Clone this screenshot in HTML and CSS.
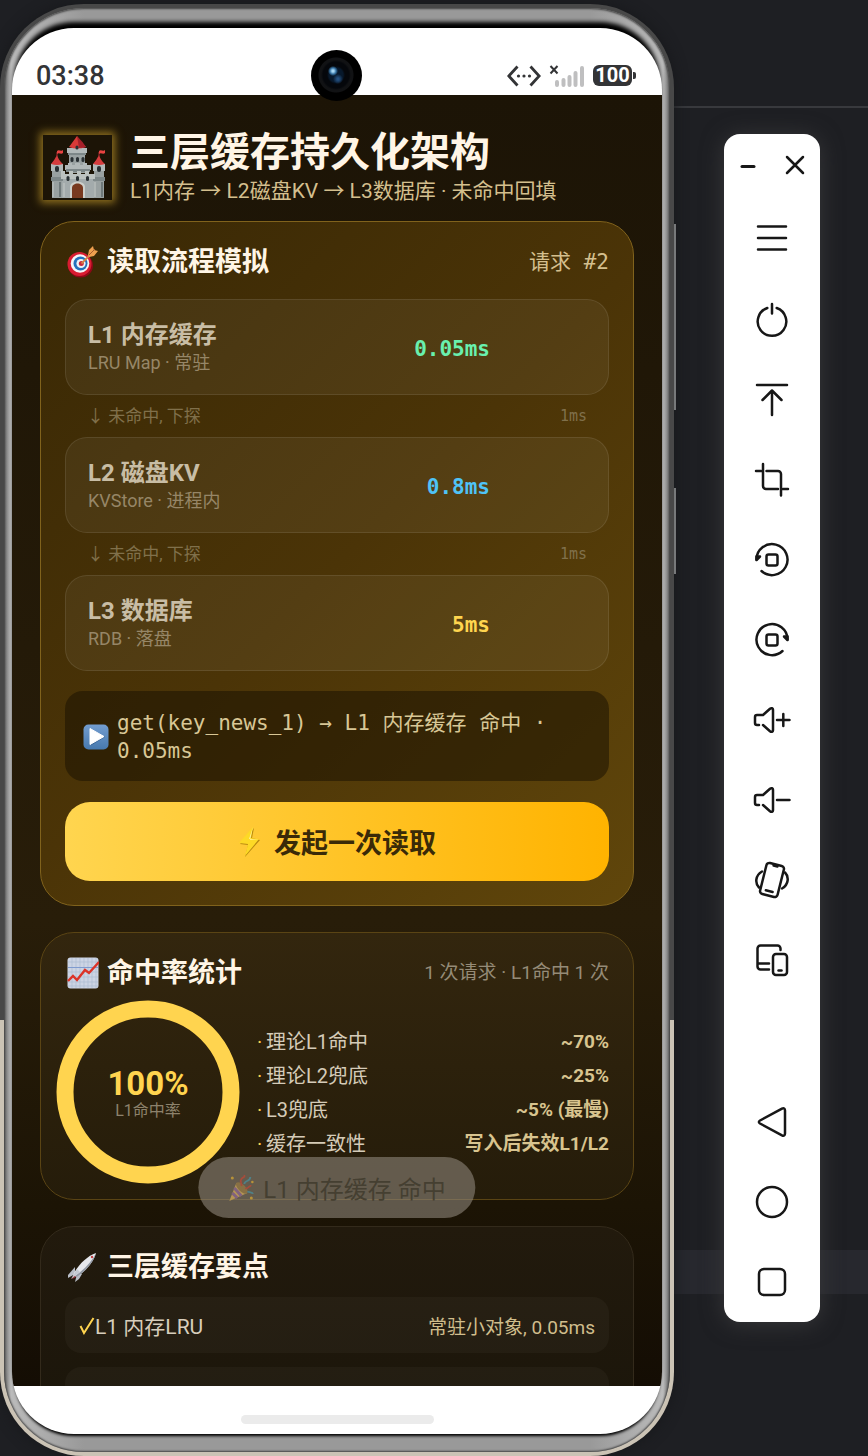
FILE: index.html
```html
<!DOCTYPE html>
<html lang="zh-CN">
<head>
<meta charset="utf-8">
<meta name="viewport" content="width=device-width, initial-scale=1">
<title>三层缓存持久化架构</title>
<link rel="stylesheet" href="styles.css">
</head>
<body>
<div class="desktop">
  <main class="phone">
    <span class="side-key side-key-volume"></span>
    <span class="side-key side-key-power"></span>
    <div class="screen">
      <header class="status">
        <span class="time">03:38</span>
        <span class="camera"></span>
        <span class="status-icons">
          <svg width="34" height="22" viewBox="0 0 34 22" fill="none" stroke="#333436" stroke-width="2.8"><path d="M10.500 1.500 1.800 11l8.700 9.500M23.500 1.500 32.200 11l-8.700 9.500"/><g fill="#333436" stroke="none"><circle cx="11.500" cy="11" r="1.600"/><circle cx="17" cy="11" r="1.600"/><circle cx="22.500" cy="11" r="1.600"/></g></svg>
          <svg width="36" height="22" viewBox="0 0 36 22" fill="none"><path d="M1.500 1l7 7.500M8.500 1l-7 7.500" stroke="#333436" stroke-width="2"/><path d="M8 17v3M14.500 15v5M20.500 12v8M26.500 8v12M33 3v17" stroke="#bfbfc0" stroke-width="4" stroke-linecap="round"/></svg>
          <span class="battery">100</span>
        </span>
      </header>

      <div class="app">
        <header class="hero">
          <span class="castle">
            <svg width="58" height="64" viewBox="0 0 58 64">
              <g fill="#99a1a1"><path d="M3 31h10v32H3z"/><path d="M45 31h10v32H45z"/><path d="M20 16h16v22H20z"/></g>
              <path d="M13 39h32v24H13z" fill="#a3abac"/>
              <path d="M2 29h12v7H2zM44 29h12v7H44zM18 13h20v5H18zM16 30v5h26v-5h-4v-2h-4v2h-3v-2h-5v2h-3v-2h-4v2z" fill="#b1b8b8"/>
              <path d="M2 42h12v4H2zM44 42h12v4H44zM17 34h24v3H17zM19 18h18v2H19z" fill="#7d8788"/>
              <path d="M12 39v-3h4v3h4v-3h4v3h4v-3h4v3h4v-3h4v3h6v5H12z" fill="#bcc2c0"/>
              <path d="M28 1Q23 8 20 12q8 3 17 0Q32 8 28 1z" fill="#d83a38"/><path d="M28 1q6 6 9 11-4 1-7 1z" fill="#a6212a"/>
              <path d="M8 20Q5 26 2 29q6 2 12 0-4-3-6-9zM50 20q-3 6-6 9 6 2 12 0-4-3-6-9z" fill="#d63c3d"/>
              <path d="M8 22v-5M50 22v-5" stroke="#a82931"/><path d="M8 16c2-2 4 1 6-1v3c-2 2-4-1-6 1zM50 16c2-2 4 1 6-1v3c-2 2-4-1-6 1z" fill="#e94341"/>
              <g fill="#293033"><rect x="26.500" y="10.500" width="3" height="4" rx="1.500"/><rect x="21.500" y="22" width="3" height="5" rx="1.500"/><rect x="27" y="22" width="3" height="5" rx="1.500"/><rect x="32.500" y="22" width="3" height="5" rx="1.500"/><rect x="6" y="31" width="4" height="6" rx="2"/><rect x="48" y="31" width="4" height="6" rx="2"/><rect x="17.500" y="41" width="3" height="5" rx="1.500"/><rect x="27" y="41" width="3" height="5" rx="1.500"/><rect x="37" y="41" width="3" height="5" rx="1.500"/></g>
              <path d="M21 63V52c0-7 15-7 15 0v11z" fill="#cdd0cb"/><path d="M23 63V53c0-6 11-6 11 0v10z" fill="#78391f"/>
              <path d="M4 47v15M46 47v15M15 48v14" stroke="#c5cac7"/><path d="M11 47v15M53 47v15" stroke="#6f797a" stroke-width="2"/>
            </svg>
          </span>
          <div>
            <h1>三层缓存持久化架构</h1>
            <p>L1内存 → L2磁盘KV → L3数据库 · 未命中回填</p>
          </div>
        </header>

        <section class="card card-flow">
          <div class="card-head">
            <svg class="emoji" viewBox="0 0 32 32"><ellipse cx="13.500" cy="19.500" rx="12.500" ry="12" fill="#8e0717"/><circle cx="12.500" cy="18" r="12" fill="#d91c31"/><circle cx="13" cy="17.500" r="9.300" fill="#f4f5f7"/><circle cx="13.500" cy="17.500" r="7" fill="#2471bc"/><circle cx="14" cy="17.500" r="4.600" fill="#eef2f6"/><circle cx="14.300" cy="17.500" r="2.500" fill="#c9293b"/><path d="m14.500 17.500 9-9" stroke="#d28247" stroke-width="1.800"/><path d="M21 9l1-5 4-4 1 4 4 1-4 5-5 1z" fill="#efa04f"/><path d="m22 9 6-6" stroke="#a85b2d"/></svg>
            <h2>读取流程模拟</h2>
            <span class="meta mono">请求 #2</span>
          </div>
          <div class="layer">
            <div><h3>L1 内存缓存</h3><p>LRU Map · 常驻</p></div>
            <strong class="mono green">0.05ms</strong>
          </div>
          <div class="miss"><span>↓ 未命中, 下探</span><span class="mono">1ms</span></div>
          <div class="layer">
            <div><h3>L2 磁盘KV</h3><p>KVStore · 进程内</p></div>
            <strong class="mono blue">0.8ms</strong>
          </div>
          <div class="miss"><span>↓ 未命中, 下探</span><span class="mono">1ms</span></div>
          <div class="layer">
            <div><h3>L3 数据库</h3><p>RDB · 落盘</p></div>
            <strong class="mono yellow">5ms</strong>
          </div>
          <div class="log">
            <svg width="26" height="26" viewBox="0 0 26 26"><defs><linearGradient id="play" x2="0" y2="1"><stop stop-color="#739dd0"/><stop offset="1" stop-color="#4779ae"/></linearGradient></defs><rect x=".5" y=".5" width="25" height="25" rx="5" fill="url(#play)"/><path d="M8 5.500 22 13 8 21.500z" fill="#3a6698"/><path d="M7 4.500 21 12.500 7 20.500z" fill="#fff" stroke="#fff" stroke-linejoin="round"/></svg>
            <p class="mono">get(key_news_1) → L1 内存缓存 命中 · 0.05ms</p>
          </div>
          <button class="read" type="button">
            <svg width="24" height="32" viewBox="0 0 24 32"><path d="M16 2 2 18l8 1-3 12L22 14l-8-2z" fill="#b98a10"/><path d="M15 1 1 17l9 1-3 12L21 13l-8-1z" fill="#fdd926"/><path d="m15 1-4 12 10 0-9 1z" fill="#fff19a"/></svg>
            发起一次读取
          </button>
        </section>

        <section class="card card-stats">
          <div class="card-head">
            <svg class="emoji" viewBox="0 0 32 32"><rect x=".5" y=".5" width="31" height="31" rx="3" fill="#ccd4e4"/><path d="M5 1v30M9 1v30M13 1v30M17 1v30M21 1v30M25 1v30M29 1v30M1 5h30M1 15h30M1 20h30M1 25h30M1 29h30" stroke="#aebbd1" stroke-width=".7"/><path d="M1 10.500h30" stroke="#7f9bcf"/><path d="m1 24 5-5 4 4 8-10 4 3 10-11" fill="none" stroke="#dc3328" stroke-width="2.400"/></svg>
            <h2>命中率统计</h2>
            <span class="meta faint">1 次请求 · L1命中 1 次</span>
          </div>
          <div class="stats">
            <div class="ring">
              <svg width="166" height="166" viewBox="0 0 166 166"><circle cx="83" cy="83" r="83" fill="none" stroke="#ffd44f" stroke-width="17"/></svg>
              <div class="ring-label"><strong>100%</strong><span>L1命中率</span></div>
            </div>
            <dl>
              <div><dt>理论L1命中</dt><dd>~70%</dd></div>
              <div><dt>理论L2兜底</dt><dd>~25%</dd></div>
              <div><dt>L3兜底</dt><dd>~5% (最慢)</dd></div>
              <div><dt>缓存一致性</dt><dd>写入后失效L1/L2</dd></div>
            </dl>
          </div>
        </section>

        <section class="card card-points">
          <div class="card-head">
            <svg class="emoji" viewBox="0 0 32 32"><path d="m8 16-7 8v3l7-4zM15 23l-3 5-4 3 2-8z" fill="#b9bec7"/><path d="m7 23-2 5 6-3z" fill="#9b3139"/><path d="M6 24C11 14 20 5 29 2c-2 8-9 17-19 24z" fill="#e6e8ed"/><path d="M29 2c-2 8-9 17-19 24l-2-1C18 18 25 10 29 2z" fill="#9299a5"/><circle cx="25" cy="6" r="1.200" fill="#c34043"/><path d="m10 18-6 10 9-7z" fill="#c5cad3"/></svg>
            <h2>三层缓存要点</h2>
          </div>
          <ul>
            <li><svg width="16" height="20" viewBox="0 0 16 20"><path d="m1.500 11 3.500 7L14.500 3" fill="none" stroke="#ffd44f" stroke-width="2"/></svg><span>L1 内存LRU</span><em>常驻小对象, 0.05ms</em></li>
            <li><svg width="16" height="20" viewBox="0 0 16 20"><path d="m1.500 11 3.500 7L14.500 3" fill="none" stroke="#ffd44f" stroke-width="2"/></svg><span>L2 磁盘KV</span></li>
          </ul>
        </section>

        <div class="toast" role="status">
          <svg width="26" height="28" viewBox="0 0 26 28"><path d="M8 9 1 27l18-8z" fill="#b49554"/><path d="m6 14 7 8M4 19l5 5" stroke="#81627e" stroke-width="3"/><ellipse cx="13.500" cy="14" rx="3.500" ry="7.500" fill="#887044" transform="rotate(-46 13.500 14)"/><path d="M13 12c1-3-2-4 0-7s4-1 3-4M17 14c3 2 3-3 6-2" fill="none" stroke="#a64c3b" stroke-width="1.800"/><path d="M16 10c0-4 6-2 6-7M19 18c3-1 4 2 6 1" fill="none" stroke="#4f8188" stroke-width="1.800"/><g fill="#b79239"><circle cx="4" cy="4" r="1.500"/><circle cx="23" cy="24" r="1.500"/><circle cx="24" cy="8" r="1.300"/></g></svg>
          L1 内存缓存 命中
        </div>
      </div>
      <footer class="home"><span></span></footer>
    </div>
  </main>

  <nav class="toolbar" aria-label="模拟器工具栏">
    <div class="window-buttons">
      <button type="button" aria-label="最小化"><svg width="16" height="20" viewBox="0 0 16 20"><path d="M2 11.500h12" stroke-width="3"/></svg></button>
      <button type="button" aria-label="关闭"><svg width="20" height="20" viewBox="0 0 20 20"><path d="m2 2 16 16M18 2 2 18"/></svg></button>
    </div>
    <button type="button" aria-label="菜单"><svg viewBox="0 0 48 48"><path d="M10 10.500h28M10 22h28M10 33.500h28"/></svg></button>
    <button type="button" aria-label="电源"><svg viewBox="0 0 48 48"><path d="M24 8v9.500M19.300 12a14.300 14.300 0 1 0 9.400 0"/></svg></button>
    <button type="button" aria-label="置顶"><svg viewBox="0 0 48 48"><path d="M9 9h30M24 39V14.500M14.500 24l9.500-9.500 9.500 9.500"/></svg></button>
    <button type="button" aria-label="截图"><svg viewBox="0 0 48 48"><path d="M15 8v22a3 3 0 0 0 3 3h12M8 15h5M18.500 15H30a3 3 0 0 1 3 3v21.500M35 33h5"/></svg></button>
    <button type="button" aria-label="向左旋转"><svg viewBox="0 0 48 48"><path d="M8.500 23.500a15.500 15.500 0 1 1 5 11.500"/><path d="M8.500 24v-3.500l3.500 0z"/><rect x="18.500" y="18.500" width="11" height="11" rx="2"/></svg></button>
    <button type="button" aria-label="向右旋转"><svg viewBox="0 0 48 48"><path d="M39.500 23.500a15.500 15.500 0 1 0-5 11.500"/><path d="M39.500 24v-3.500l-3.500 0z"/><rect x="18.500" y="18.500" width="11" height="11" rx="2"/></svg></button>
    <button type="button" aria-label="音量加"><svg viewBox="0 0 48 48"><path d="M11 29H9a2 2 0 0 1-2-2v-6a2 2 0 0 1 2-2h6l7-6.200c1.500-1.200 3-.6 3 1v20.400c0 1.600-1.500 2.200-3 1L15 29M29 24h12.500M35.300 18v12"/></svg></button>
    <button type="button" aria-label="音量减"><svg viewBox="0 0 48 48"><path d="M11 29H9a2 2 0 0 1-2-2v-6a2 2 0 0 1 2-2h6l7-6.200c1.500-1.200 3-.6 3 1v20.400c0 1.600-1.500 2.200-3 1L15 29M29 24h12.500"/></svg></button>
    <button type="button" aria-label="摇一摇"><svg viewBox="0 0 48 48"><g transform="rotate(14 24 24)"><rect x="15" y="8" width="18" height="32" rx="3"/><path d="M20.500 35.500h7M22 9.500h4"/></g><path d="M14 15.500c-7 4-7 12-3 16M34 32.500c7-4 7-12 3-16"/></svg></button>
    <button type="button" aria-label="多设备"><svg viewBox="0 0 48 48"><path d="M32.500 14v-1.500a3 3 0 0 0-3-3h-17a3 3 0 0 0-3 3v18a3 3 0 0 0 3 3H21M9.500 27.500H21"/><rect x="25" y="18" width="14" height="21" rx="3"/><path d="M30.500 34.500h3"/></svg></button>
    <span class="spacer"></span>
    <button type="button" aria-label="返回"><svg viewBox="0 0 48 48"><path d="M12 22.500 34 10.600c1.800-.9 3-.1 3 1.800v23.200c0 1.900-1.200 2.700-3 1.800L12 25.500c-1.500-1-1.500-2.100 0-3z"/></svg></button>
    <button type="button" aria-label="主页"><svg viewBox="0 0 48 48"><circle cx="24" cy="24" r="15"/></svg></button>
    <button type="button" aria-label="最近任务"><svg viewBox="0 0 48 48"><rect x="11" y="11" width="26" height="26" rx="5"/></svg></button>
  </nav>
</div>
</body>
</html>
```
FILE: styles.css
```css
* { box-sizing: border-box; }

body {
  margin: 0;
  background:
    linear-gradient(transparent 106px, #38393d 106px 108px, transparent 108px),
    linear-gradient(to top, transparent 162px, #27282e 162px 206px, transparent 206px),
    #1e1f23;
  font-family: Roboto, "Noto Sans CJK SC", sans-serif;
  color: #fff5e6;
}

h1, h2, h3, p, ul, dl, dd { margin: 0; padding: 0; font-size: inherit; }
button { border: 0; padding: 0; background: none; font: inherit; }
svg { display: block; flex: none; }
.mono { font-family: "DejaVu Sans Mono", "Noto Sans CJK SC", monospace; }

.desktop {
  display: flex;
  align-items: flex-start;
  gap: 50px;
  height: 100vh;
  padding-right: 48px;
}

/* Phone shell */
.phone {
  position: relative;
  flex: 1;
  min-width: 0;
  height: calc(100% - 4px);
  margin-top: 4px;
  padding: 20px 8px 18px;
  border: 4px solid transparent;
  border-radius: 84px;
  background:
    linear-gradient(to right, #666, #bbb 7px, #999 80px, #999 calc(100% - 80px), #bbb calc(100% - 7px), #666) padding-box,
    linear-gradient(#484848 70%, #cbc3b5 70%) border-box;
  box-shadow: 0 0 14px #17181b, inset 0 0 2px 1px #444;
}
.side-key {
  position: absolute;
  right: -6px;
  width: 2px;
  background: #77797a;
}
.side-key-volume { top: 216px; height: 186px; }
.side-key-power { top: 480px; height: 86px; }
.screen {
  display: flex;
  flex-direction: column;
  height: 100%;
  overflow: hidden;
  border-radius: 62px;
  background: #fff;
  box-shadow: 0 -8px 4px -2px #000, 0 4px 3px -2px #000;
}
.status {
  position: relative;
  z-index: 2;
  display: flex;
  align-items: center;
  justify-content: space-between;
  flex: none;
  height: 67px;
  padding: 28px 30px 0 24px;
  color: #333436;
}
.time { font-size: 27px; font-weight: 500; }
.camera {
  position: absolute;
  top: 22px;
  left: calc(50% - 26px);
  width: 51px;
  height: 51px;
  border-radius: 50%;
  background:
    radial-gradient(circle at 22px 21px, #a8d8f4 0 1px, #3977a8 3px, transparent 5px),
    radial-gradient(circle at 27px 29px, #245080 0 1px, transparent 5px),
    radial-gradient(circle at 25px 25px, #07182b 0 7px, #05070b 9px 13px, #111214 15px 17px, #000 18px);
}
.status-icons { display: flex; align-items: center; gap: 8px; }
.battery {
  position: relative;
  width: 39px;
  border-radius: 6px;
  background: #333436;
  color: #fff;
  font-size: 20px;
  font-weight: 700;
  line-height: 21px;
  text-align: center;
}
.battery::after {
  content: "";
  position: absolute;
  top: 7px;
  right: -4px;
  width: 3px;
  height: 7px;
  border-radius: 0 2px 2px 0;
  background: #333436;
}

/* App */
.app {
  position: relative;
  display: flex;
  flex-direction: column;
  gap: 26px;
  flex: 1;
  min-height: 0;
  overflow: hidden;
  padding: 36px 28px 0;
  background: linear-gradient(#1c1406, #281d09 64%, #1c1405 86%, #140d04);
}
.app > * { flex: none; }
.hero { display: flex; align-items: center; gap: 18px; height: 72px; margin-bottom: -8px; }
.hero > div { padding-top: 4px; }
.castle {
  display: grid;
  place-items: center;
  width: 69px;
  height: 65px;
  margin-left: 3px;
  background: #1c1406;
  box-shadow: 0 0 8px 3px #8f701f;
}
h1 { font-size: 40px; font-weight: 700; line-height: 44px; }
.hero p { color: #d4bf8e; font-size: 21px; line-height: 32px; white-space: nowrap; }

.card { padding: 24px; border: 1px solid; border-radius: 34px; }
.card-flow { border-color: #80621c; background: linear-gradient(135deg, #392805, #4b3407 50%, #60460b); }
.card-stats { border-color: #5a4414; background: linear-gradient(#33260e, #251c0a); }
.card-points { border-color: #332a1b; background: linear-gradient(#221a0d, #1a150a); }
.card-head { display: flex; align-items: center; gap: 8px; height: 32px; }
.emoji { width: 32px; height: 32px; margin-left: 2px; }
h2 { font-size: 27px; font-weight: 700; line-height: 32px; }
.meta { margin-left: auto; color: #d4bf8e; font-size: 21px; line-height: 32px; }
.faint { color: #958b77; font-size: 19px; }

.layer {
  display: flex;
  align-items: center;
  justify-content: space-between;
  min-height: 96px;
  padding: 0 118px 0 22px;
  border: 1px solid rgba(255, 255, 255, .09);
  border-radius: 22px;
  background: rgba(255, 255, 255, .05);
}
.card-head + .layer { margin-top: 21px; }
h3 { color: #c8bda5; font-size: 24px; font-weight: 700; line-height: 31px; }
.layer p { color: #968667; font-size: 18px; line-height: 24px; }
.layer strong { padding-top: 3px; font-size: 21px; }
.green { color: #69f0ae; }
.blue { color: #4fc3f7; }
.yellow { color: #ffd54f; }
.miss {
  display: flex;
  justify-content: space-between;
  padding: 0 22px;
  color: #80704b;
  font-size: 17px;
  line-height: 42px;
}
.miss .mono { font-size: 15px; }

.log {
  display: flex;
  align-items: center;
  gap: 8px;
  margin-top: 20px;
  padding: 18px 60px 16px 18px;
  border-radius: 18px;
  background: rgba(28, 18, 2, .55);
  color: #d8c796;
  font-size: 21px;
  line-height: 28px;
}
.read {
  display: flex;
  align-items: center;
  justify-content: center;
  gap: 12px;
  width: 100%;
  height: 79px;
  margin-top: 21px;
  border-radius: 25px;
  background: linear-gradient(90deg, #ffd54f, #ffb300);
  color: #3a2a08;
  font-size: 27px;
  font-weight: 700;
}

.stats { display: flex; align-items: center; gap: 26px; margin-top: 20px; }
.ring { display: grid; place-items: center; flex: none; }
.ring > * { grid-area: 1 / 1; }
.ring svg { overflow: visible; }
.ring-label { display: flex; flex-direction: column; align-items: center; padding-top: 3px; }
.ring-label strong { color: #ffd44f; font-size: 33px; line-height: 34px; }
.ring-label span { color: #8d826c; font-size: 16px; line-height: 20px; }
dl { display: flex; flex-direction: column; gap: 10px; flex: 1; padding-top: 2px; }
dl div { display: flex; align-items: center; line-height: 24px; }
dt { flex: 1; font-size: 20px; color: #d5cbb8; }
dt::before { content: "·"; display: inline-block; width: 9px; color: #ffd44f; }
dd { color: #d8c48f; font-size: 19px; font-weight: 700; }

ul { display: grid; gap: 14px; margin-top: 14px; list-style: none; }
li {
  display: flex;
  align-items: center;
  height: 56px;
  padding: 0 14px;
  border-radius: 16px;
  background: rgba(255, 255, 255, .03);
  color: #d7cebc;
  font-size: 21px;
}
li em { margin-left: auto; color: #d0bd8c; font-size: 19px; font-style: normal; }

.toast {
  position: absolute;
  bottom: 168px;
  left: 50%;
  transform: translateX(-50%);
  display: flex;
  align-items: center;
  gap: 9px;
  height: 61px;
  padding: 0 30px;
  border-radius: 31px;
  background: rgba(141, 134, 121, .6);
  color: #453f31;
  font-size: 24px;
  white-space: nowrap;
}
.home { display: grid; place-items: center; flex: none; height: 48px; padding-top: 18px; }
.home span { width: 193px; height: 9px; border-radius: 5px; background: #ebebeb; }

/* Emulator toolbar */
.toolbar {
  display: flex;
  flex-direction: column;
  flex: none;
  width: 96px;
  margin-top: 134px;
  border-radius: 16px;
  background: #fff;
  box-shadow: 0 2px 22px #38383a;
}
.toolbar svg { fill: none; stroke: #171717; stroke-width: 2.5; stroke-linecap: round; stroke-linejoin: round; }
.toolbar > button { display: grid; place-items: center; height: 80px; }
.toolbar > button svg { width: 48px; height: 48px; }
.window-buttons { display: flex; align-items: center; justify-content: space-between; height: 66px; padding: 0 15px 4px 16px; }
.spacer { height: 82px; }
```
